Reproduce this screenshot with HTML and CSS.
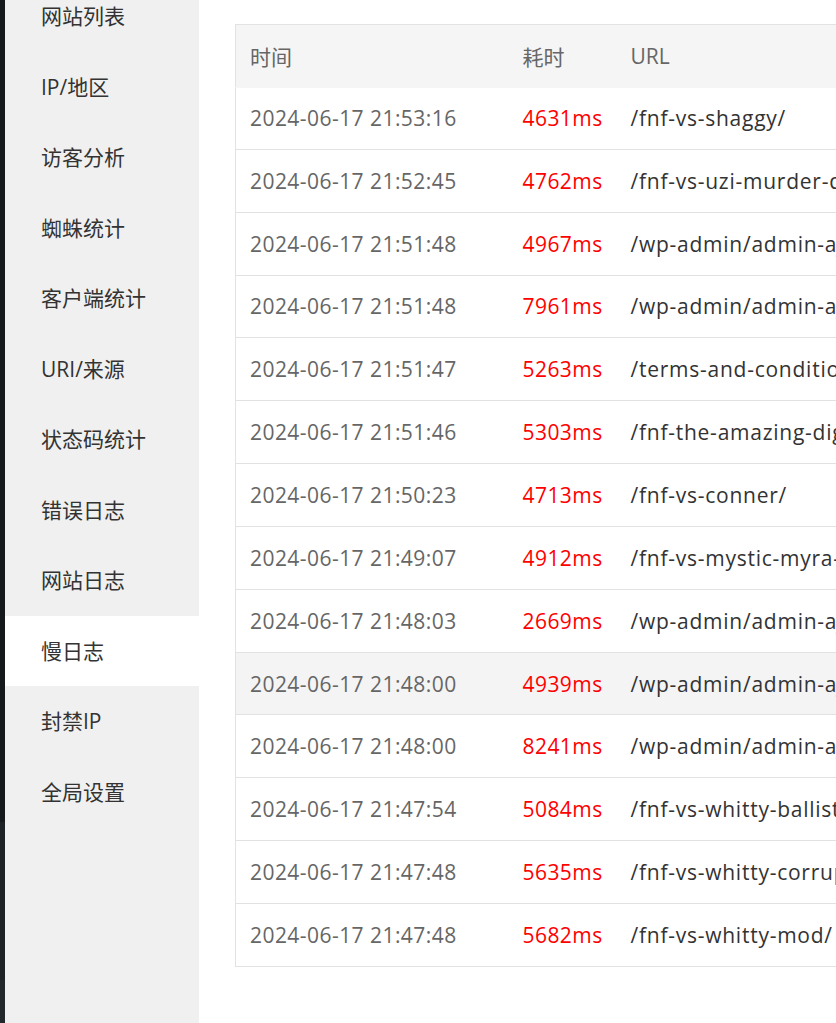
FILE: index.html
```html
<!DOCTYPE html>
<html lang="zh-CN">
<head>
<meta charset="utf-8">
<title>慢日志</title>
<link rel="stylesheet" href="styles.css">
</head>
<body>
<div class="layout">
  <div class="rail"></div>
  <nav class="sidebar">
    <div class="nav-item">网站列表</div>
    <div class="nav-item">IP/地区</div>
    <div class="nav-item">访客分析</div>
    <div class="nav-item">蜘蛛统计</div>
    <div class="nav-item">客户端统计</div>
    <div class="nav-item">URI/来源</div>
    <div class="nav-item">状态码统计</div>
    <div class="nav-item">错误日志</div>
    <div class="nav-item">网站日志</div>
    <div class="nav-item active">慢日志</div>
    <div class="nav-item">封禁IP</div>
    <div class="nav-item">全局设置</div>
  </nav>
  <main class="main">
    <table class="log-table">
      <colgroup>
        <col class="c-time">
        <col class="c-ms">
        <col class="c-url">
      </colgroup>
      <thead>
        <tr><th>时间</th><th>耗时</th><th>URL</th></tr>
      </thead>
      <tbody>
        <tr><td class="t">2024-06-17 21:53:16</td><td class="ms">4631ms</td><td class="url">/fnf-vs-shaggy/</td></tr>
        <tr><td class="t">2024-06-17 21:52:45</td><td class="ms">4762ms</td><td class="url">/fnf-vs-uzi-murder-drones/</td></tr>
        <tr><td class="t">2024-06-17 21:51:48</td><td class="ms">4967ms</td><td class="url">/wp-admin/admin-ajax.php</td></tr>
        <tr><td class="t">2024-06-17 21:51:48</td><td class="ms">7961ms</td><td class="url">/wp-admin/admin-ajax.php</td></tr>
        <tr><td class="t">2024-06-17 21:51:47</td><td class="ms">5263ms</td><td class="url">/terms-and-conditions/</td></tr>
        <tr><td class="t">2024-06-17 21:51:46</td><td class="ms">5303ms</td><td class="url">/fnf-the-amazing-digital-circus/</td></tr>
        <tr><td class="t">2024-06-17 21:50:23</td><td class="ms">4713ms</td><td class="url">/fnf-vs-conner/</td></tr>
        <tr><td class="t">2024-06-17 21:49:07</td><td class="ms">4912ms</td><td class="url">/fnf-vs-mystic-myra-mod/</td></tr>
        <tr><td class="t">2024-06-17 21:48:03</td><td class="ms">2669ms</td><td class="url">/wp-admin/admin-ajax.php</td></tr>
        <tr class="hover"><td class="t">2024-06-17 21:48:00</td><td class="ms">4939ms</td><td class="url">/wp-admin/admin-ajax.php</td></tr>
        <tr><td class="t">2024-06-17 21:48:00</td><td class="ms">8241ms</td><td class="url">/wp-admin/admin-ajax.php</td></tr>
        <tr><td class="t">2024-06-17 21:47:54</td><td class="ms">5084ms</td><td class="url">/fnf-vs-whitty-ballistic/</td></tr>
        <tr><td class="t">2024-06-17 21:47:48</td><td class="ms">5635ms</td><td class="url">/fnf-vs-whitty-corrupted/</td></tr>
        <tr><td class="t">2024-06-17 21:47:48</td><td class="ms">5682ms</td><td class="url">/fnf-vs-whitty-mod/</td></tr>
      </tbody>
    </table>
  </main>
</div>
</body>
</html>
```
FILE: styles.css
```css
html, body {
  margin: 0;
  padding: 0;
  background: #fff;
  overflow: hidden;
}
body {
  font-family: "Open Sans", "Noto Sans CJK SC", sans-serif;
  font-size: 21px;
  color: #333;
}
.layout {
  display: flex;
  margin-top: -19px;
  height: calc(100vh + 19px);
}
.rail {
  width: 5px;
  flex: none;
  background: linear-gradient(to bottom, #15191c 0, #15191c 841px, #1d2227 841px, #1d2227 999px, #22272c 999px);
}
.sidebar {
  width: 194px;
  flex: none;
  background: #f0f0f0;
}
.nav-item {
  height: 70.5px;
  line-height: 70.5px;
  padding-left: 36px;
  color: #333;
  white-space: nowrap;
}
.nav-item.active {
  background: #fff;
}
.main {
  flex: 1;
  min-width: 0;
  overflow: hidden;
  padding: 43px 0 0 36px;
}
.log-table {
  border-collapse: collapse;
  width: 1000px;
  border: 1px solid #e2e2e2;
  table-layout: fixed;
}
.c-time { width: 273px; }
.c-ms { width: 108px; }
.log-table th,
.log-table td {
  text-align: left;
  padding: 0 14px;
  white-space: nowrap;
  overflow: hidden;
}
.log-table th {
  height: 62px;
  background: #f5f5f5;
  font-weight: normal;
  color: #666;
  border-bottom: 1px solid #f5f5f5;
}
.log-table td {
  height: 61.857px;
  border-bottom: 1px solid #e2e2e2;
  letter-spacing: 0.45px;
}
.log-table tbody tr:first-child td {
  height: 60.857px;
}
.log-table tr.hover td {
  background: #f4f4f4;
}
.log-table td.t { color: #666; }
.log-table td.ms { color: #f00; }
.log-table td.url { color: #333; letter-spacing: 0.75px; }
```
